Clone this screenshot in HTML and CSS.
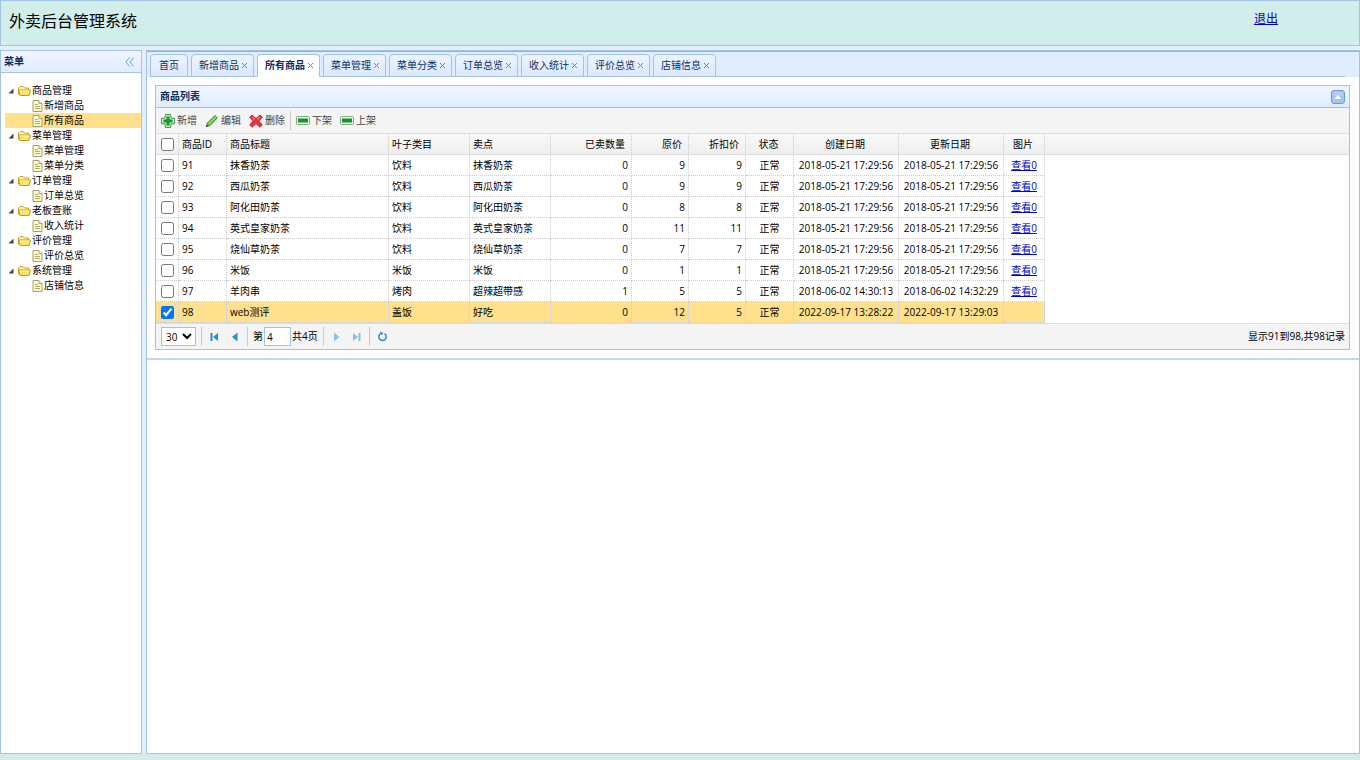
FILE: index.html
```
<!DOCTYPE html>
<html lang="zh-CN">
<head>
    <meta charset="UTF-8">
    <meta name="viewport" content="width=device-width, initial-scale=1.0">
    <title>外卖后台管理系统</title>
    <link rel="stylesheet" href="styles.css">
</head>
<body>
    <!-- 公用图标 -->
    <svg class="sprite" width="0" height="0" aria-hidden="true">
        <symbol id="arrow" viewBox="0 0 6 6"><path d="M5.5 0.5V5.5H0.5Z" fill="#444"/></symbol>
        <symbol id="folder" viewBox="0 0 13 12">
            <path d="M0.5 9.5V3L2 1.5H5L6.5 3H10.5V5" fill="#fff3a8" stroke="#c9a227"/>
            <path d="M0.5 5H12.5L11 10.5H2Z" fill="#ffe566" stroke="#c39a1c" stroke-linejoin="round"/>
            <path d="M2 6H11.5" stroke="#fff6b0"/>
        </symbol>
        <symbol id="file" viewBox="0 0 11 12">
            <path d="M1 0.5H7L10 3.5V11.5H1Z" fill="#fbf8cf" stroke="#a3a06a"/>
            <path d="M7 0.5V3.5H10" fill="#fff" stroke="#a3a06a"/>
            <path d="M3 4.5H6M3 6.5H8M3 8.5H8" stroke="#b3ae62"/>
        </symbol>
        <symbol id="minus" viewBox="0 0 14 10">
            <rect x="0.5" y="0.5" width="13" height="8" rx="1" fill="#e9f6e7" stroke="#7fae7e"/>
            <rect x="2.5" y="3" width="9" height="3" fill="#15952a" stroke="#1f8a30"/>
        </symbol>
    </svg>

    <header class="top">
        <h1>外卖后台管理系统</h1>
        <a href="#" class="logout">退出</a>
    </header>

    <div class="layout">
        <aside class="sidebar">
            <div class="sidebar-title">
                <h2>菜单</h2>
                <button type="button" class="collapse" aria-label="收起菜单">
                    <svg width="9" height="10" viewBox="0 0 9 10" fill="none" stroke="#5aa9d6"><path d="M4.5 0.5L1 5L4.5 9.5M8.5 0.5L5 5L8.5 9.5"/></svg>
                </button>
            </div>
            <ul class="tree" id="tree"></ul>
        </aside>

        <main class="main">
            <div class="workspace">
                <nav class="tabs">
                    <ul class="tab-list" id="tabs"></ul>
                </nav>
                <section class="panel">
                    <div class="panel-title">
                        <h2>商品列表</h2>
                        <button type="button" class="fold" aria-label="折叠">
                            <svg width="14" height="14" viewBox="0 0 14 14"><rect x="0.5" y="0.5" width="13" height="13" rx="2.5" fill="#a5c4f1" stroke="#6f9ad0"/><path d="M2 2H12V6H2Z" fill="#b3cdf4"/><path d="M3.5 9L7 5L10.5 9Z" fill="#fff"/></svg>
                        </button>
                    </div>

                    <div class="toolbar">
                        <button type="button" class="tool">
                            <svg width="14" height="14" viewBox="0 0 14 14"><path d="M4.5 0.5H9.5L10 4L13.5 4.5V9.5L10 10L9.5 13.5H4.5L4 10L0.5 9.5V4.5L4 4Z" fill="#c9eec4" stroke="#4d8f4c" stroke-linejoin="round"/><path d="M7 2.5V11.5M2.5 7H11.5" stroke="#18962a" stroke-width="3"/></svg>
                            新增
                        </button>
                        <button type="button" class="tool">
                            <svg width="14" height="14" viewBox="0 0 14 14"><path d="M1.5 12.5L2.5 9L10 1.5L12.3 3.8L5 11.5Z" fill="#67c53f" stroke="#38812a" stroke-linejoin="round"/><path d="M3.8 9.8L10.8 2.8" stroke="#c3f09c"/><path d="M1 13L1.7 10.7L3.3 12.3Z" fill="#333"/></svg>
                            编辑
                        </button>
                        <button type="button" class="tool">
                            <svg width="14" height="14" viewBox="0 0 14 14"><path d="M3 1L7 4.5L11 1L13.3 3.2L9.8 7L13.3 10.8L11 13.3L7 9.6L3 13.3L0.7 10.8L4.2 7L0.7 3.2Z" fill="#e7333b" stroke="#c0303a" stroke-linejoin="round"/><path d="M3 3L6 5.6M11 3L8 5.6" stroke="#ff9a96"/></svg>
                            删除
                        </button>
                        <span class="sep"></span>
                        <button type="button" class="tool"><svg width="14" height="10"><use href="#minus"/></svg>下架</button>
                        <button type="button" class="tool"><svg width="14" height="10"><use href="#minus"/></svg>上架</button>
                    </div>

                    <table class="grid">
                        <colgroup>
                            <col class="c-check"><col class="c-id"><col class="c-title"><col class="c-mid"><col class="c-mid"><col class="c-mid">
                            <col class="c-price"><col class="c-price"><col class="c-status"><col class="c-date"><col class="c-date"><col class="c-pic"><col>
                        </colgroup>
                        <thead>
                            <tr>
                                <th><input type="checkbox" aria-label="全选"></th>
                                <th>商品ID</th>
                                <th>商品标题</th>
                                <th>叶子类目</th>
                                <th>卖点</th>
                                <th class="num">已卖数量</th>
                                <th class="num">原价</th>
                                <th class="num">折扣价</th>
                                <th class="center">状态</th>
                                <th class="center">创建日期</th>
                                <th class="center">更新日期</th>
                                <th class="center">图片</th>
                                <th class="rest"></th>
                            </tr>
                        </thead>
                        <tbody id="rows"></tbody>
                    </table>

                    <div class="pager">
                        <select aria-label="每页条数"><option>30</option></select>
                        <span class="sep"></span>
                        <button type="button" class="page-btn" aria-label="首页"><svg width="9" height="10" viewBox="0 0 9 10" fill="#2a8fd0"><path d="M0.5 1H2.5V9H0.5ZM8 1V9L3 5Z"/></svg></button>
                        <button type="button" class="page-btn" aria-label="上一页"><svg width="9" height="10" viewBox="0 0 9 10" fill="#2a8fd0"><path d="M7.5 0.5V9.5L2 5Z"/></svg></button>
                        <span class="sep"></span>
                        <label class="page-no">第<input type="text" value="4">共4页</label>
                        <span class="sep"></span>
                        <button type="button" class="page-btn off" aria-label="下一页"><svg width="9" height="10" viewBox="0 0 9 10" fill="#2a8fd0"><path d="M2 0.5V9.5L7.5 5Z"/></svg></button>
                        <button type="button" class="page-btn off" aria-label="末页"><svg width="9" height="10" viewBox="0 0 9 10" fill="#2a8fd0"><path d="M6.5 1H8.5V9H6.5ZM1 1V9L6 5Z"/></svg></button>
                        <span class="sep"></span>
                        <button type="button" class="page-btn" aria-label="刷新"><svg width="11" height="11" viewBox="0 0 11 11" fill="none" stroke="#2a8fd0" stroke-width="1.5"><path d="M7.5 2.6A3.7 3.7 0 1 1 3.5 2.6"/><path d="M3 0.5L6.5 2L4.2 4.5Z" fill="#2a8fd0" stroke="none"/></svg></button>
                        <span class="total">显示91到98,共98记录</span>
                    </div>
                </section>
            </div>
        </main>
    </div>

    <script>
        const menu = [
            ["商品管理", ["新增商品", "所有商品"]],
            ["菜单管理", ["菜单管理", "菜单分类"]],
            ["订单管理", ["订单总览"]],
            ["老板查账", ["收入统计"]],
            ["评价管理", ["评价总览"]],
            ["系统管理", ["店铺信息"]]
        ];
        const tabs = ["首页", "新增商品", "所有商品", "菜单管理", "菜单分类", "订单总览", "收入统计", "评价总览", "店铺信息"];
        const current = "所有商品";
        const d = "2018-05-21 17:29:56";
        // ID, 标题, 类目, 卖点, 已卖, 原价, 折扣价, 创建, 更新
        const goods = [
            [91, "抹香奶茶", "饮料", "抹香奶茶", 0, 9, 9, d, d],
            [92, "西瓜奶茶", "饮料", "西瓜奶茶", 0, 9, 9, d, d],
            [93, "阿化田奶茶", "饮料", "阿化田奶茶", 0, 8, 8, d, d],
            [94, "英式皇家奶茶", "饮料", "英式皇家奶茶", 0, 11, 11, d, d],
            [95, "烧仙草奶茶", "饮料", "烧仙草奶茶", 0, 7, 7, d, d],
            [96, "米饭", "米饭", "米饭", 0, 1, 1, d, d],
            [97, "羊肉串", "烤肉", "超辣超带感", 1, 5, 5, "2018-06-02 14:30:13", "2018-06-02 14:32:29"],
            [98, "web测评", "盖饭", "好吃", 0, 12, 5, "2022-09-17 13:28:22", "2022-09-17 13:29:03"]
        ];

        document.getElementById("tree").innerHTML = menu.map(([name, items]) => `
            <li>
                <div class="node"><svg class="arrow" width="6" height="6"><use href="#arrow"/></svg><svg width="13" height="12"><use href="#folder"/></svg>${name}</div>
                <ul>${items.map(item => `<li><a href="#" class="node leaf${item === current ? " selected" : ""}"><svg width="11" height="12"><use href="#file"/></svg>${item}</a></li>`).join("")}</ul>
            </li>`).join("");

        document.getElementById("tabs").innerHTML = tabs.map((name, i) => `
            <li class="tab${name === current ? " active" : ""}"><a href="#">${name}</a>${i ? `<button type="button" class="close" aria-label="关闭${name}"><svg width="5" height="5" viewBox="0 0 5 5" stroke="#6b87a8"><path d="M0 0L5 5M5 0L0 5"/></svg></button>` : ""}</li>`).join("");

        document.getElementById("rows").innerHTML = goods.map(g => {
            const checked = g[0] === 98;
            return `<tr class="${checked ? "checked" : ""}">
                <td><input type="checkbox" aria-label="选择${g[0]}"${checked ? " checked" : ""}></td>
                <td>${g[0]}</td><td>${g[1]}</td><td>${g[2]}</td><td>${g[3]}</td>
                <td class="num">${g[4]}</td><td class="num">${g[5]}</td><td class="num">${g[6]}</td>
                <td class="center">正常</td><td class="center">${g[7]}</td><td class="center">${g[8]}</td>
                <td class="center">${checked ? "" : `<a href="#">查看0</a>`}</td><td class="rest"></td>
            </tr>`;
        }).join("");
    </script>
</body>
</html>
```
FILE: styles.css
```
* {
    box-sizing: border-box;
}
body {
    margin: 0;
    height: 100vh;
    display: flex;
    flex-direction: column;
    padding-bottom: 6px;
    background: #d2eeeb;
    color: #000;
    font-family: "Open Sans", "Noto Sans CJK SC", sans-serif;
    font-size: 10px;
    line-height: 15px;
}
h1, h2, ul {
    margin: 0;
    padding: 0;
    list-style: none;
}
button, input, select {
    font: inherit;
    margin: 0;
}
button {
    display: flex;
    align-items: center;
    padding: 0;
    border: none;
    background: none;
    cursor: pointer;
}
svg {
    display: block;
    flex: none;
}
.sprite {
    position: absolute;
}
a {
    color: #0000c8;
}

/* 顶部 */
.top {
    display: flex;
    justify-content: space-between;
    align-items: flex-start;
    height: 46px;
    padding: 8px 81px 0 8px;
    border: 1px solid #a3c3e3;
    background: #d2eeeb;
}
.top h1 {
    font-size: 16px;
    font-weight: normal;
    line-height: 24px;
}
.logout {
    font-size: 12px;
    line-height: 20px;
}

.layout {
    display: flex;
    flex: 1;
    gap: 4px;
    min-height: 0;
    padding-top: 4px;
    background: #e3eeff;
}

/* 左侧菜单 */
.sidebar {
    flex: none;
    width: 142px;
    border: 1px solid #a3c3e3;
    background: #fff;
}
.sidebar-title, .panel-title {
    display: flex;
    align-items: center;
    justify-content: space-between;
    height: 22px;
    border-bottom: 1px solid #a3c3e3;
    background: linear-gradient(#f0f6ff, #e0ecff);
}
.sidebar-title {
    padding: 0 7px 0 3px;
}
.sidebar h2, .panel h2 {
    color: #0e2d5f;
    font-size: 10px;
    font-weight: bold;
}
.tree {
    padding: 10px 0 0 4px;
}
.node {
    display: flex;
    align-items: center;
    gap: 1px;
    height: 15px;
    padding-left: 3px;
    color: #000;
    text-decoration: none;
}
.arrow {
    margin-right: 3px;
}
.leaf {
    padding-left: 27px;
}
.selected {
    background: #ffe08c;
}

/* 右侧内容 */
.main {
    flex: 1;
    min-width: 0;
    border: 1px solid #a3c3e3;
    background: #fff;
}
.workspace {
    border-top: 1px solid #8db2e3;
    border-bottom: 2px solid #c3d6ea;
}
.tabs {
    padding: 2px 14px 0 3px;
    background: #e0ecff;
}
.tab-list {
    display: flex;
    gap: 3px;
    height: 23px;
    border-bottom: 1px solid #a3c3e3;
}
.tab {
    display: flex;
    align-items: center;
    gap: 3px;
    height: 23px;
    padding: 0 6px 0 7px;
    border: 1px solid #a3c3e3;
    border-radius: 4px 4px 0 0;
    background: linear-gradient(#edf4ff, #dce9ff);
}
.tab:first-child {
    padding: 0 8px;
}
.tab a {
    color: #0e2d5f;
    text-decoration: none;
}
.tab.active {
    border-bottom-color: #fff;
    background: #fff;
}
.active a {
    font-weight: bold;
}

.panel {
    margin: 8px 9px 8px 8px;
    border: 1px solid #a3c3e3;
}
.panel-title {
    padding: 0 4px;
}
.toolbar {
    display: flex;
    align-items: center;
    gap: 8px;
    height: 26px;
    padding: 0 5px;
    border-bottom: 1px solid #ddd;
    background: #f4f4f4;
}
.tool {
    gap: 2px;
    color: #444;
}
.sep {
    width: 1px;
    height: 19px;
    background: #ccc;
}
.toolbar .sep {
    margin: 0 -3px;
}

/* 商品表格 */
.grid {
    width: 100%;
    table-layout: fixed;
    border-spacing: 0;
}
.c-check { width: 23px; }
.c-id { width: 48px; }
.c-title { width: 162px; }
.c-mid { width: 81px; }
.c-price { width: 57px; }
.c-status { width: 48px; }
.c-date { width: 105px; }
.c-pic { width: 41px; }
.grid th, .grid td {
    height: 21px;
    padding: 0 3px;
    border-right: 1px dotted #ccc;
    border-bottom: 1px dotted #ccc;
    text-align: left;
    font-weight: normal;
    white-space: nowrap;
}
.grid th {
    border-bottom: 1px solid #ddd;
    background: linear-gradient(#f9f9f9, #efefef);
}
.grid .num {
    text-align: right;
}
.grid th.num {
    padding-right: 6px;
}
.grid .center {
    text-align: center;
}
.grid th.center {
    padding-right: 5px;
}
.grid .rest {
    border-right: none;
}
.grid td.rest {
    border-bottom: none;
}
.grid input {
    display: block;
    width: 13px;
    height: 13px;
    margin-left: 2px;
}
.checked td:not(.rest) {
    background: #ffe08c;
}

/* 分页 */
.pager {
    display: flex;
    align-items: center;
    gap: 5px;
    height: 26px;
    padding: 0 4px 0 5px;
    border-top: 1px solid #ddd;
    background: #f4f4f4;
}
.pager select {
    width: 35px;
    height: 19px;
    padding: 0;
    border: 1px solid #a3c3e3;
    background: #fff;
}
.page-btn {
    justify-content: center;
    width: 15px;
    height: 16px;
}
.off {
    opacity: 0.5;
}
.page-no {
    display: flex;
    align-items: center;
    gap: 1px;
}
.page-no input {
    width: 27px;
    height: 19px;
    padding: 0 2px;
    border: 1px solid #a3c3e3;
}
.total {
    margin-left: auto;
}
```
